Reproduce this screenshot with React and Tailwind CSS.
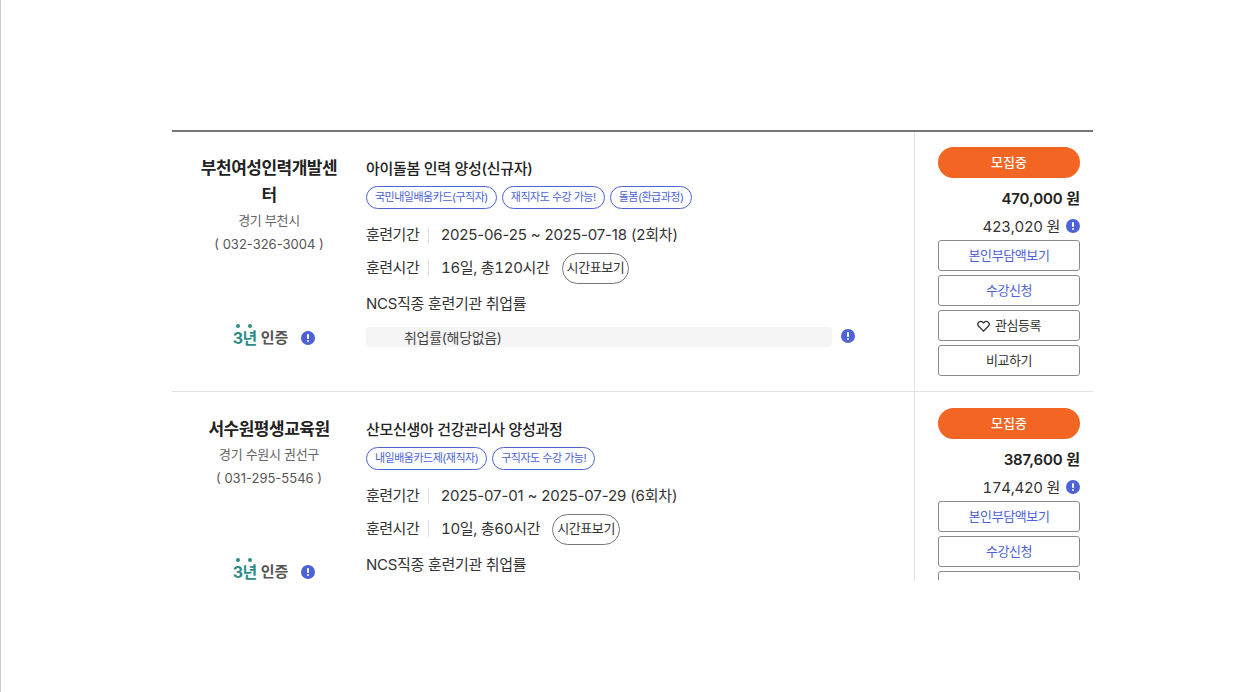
import { useState } from "react";

const courses = [
  {
    org: "부천여성인력개발센터",
    region: "경기 부천시",
    tel: "( 032-326-3004 )",
    title: "아이돌봄 인력 양성(신규자)",
    tags: ["국민내일배움카드(구직자)", "재직자도 수강 가능!", "돌봄(환급과정)"],
    period: "2025-06-25 ~ 2025-07-18 (2회차)",
    hours: "16일, 총120시간",
    price: "470,000 원",
    self: "423,020 원",
  },
  {
    org: "서수원평생교육원",
    region: "경기 수원시 권선구",
    tel: "( 031-295-5546 )",
    title: "산모신생아 건강관리사 양성과정",
    tags: ["내일배움카드제(재직자)", "구직자도 수강 가능!"],
    period: "2025-07-01 ~ 2025-07-29 (6회차)",
    hours: "10일, 총60시간",
    price: "387,600 원",
    self: "174,420 원",
  },
];

function InfoDot({ className = "" }) {
  return (
    <span className={"flex h-[14px] w-[14px] shrink-0 items-center justify-center rounded-full bg-[#4c62d6] " + className}>
      <svg width="4" height="10" viewBox="0 0 4 10">
        <rect x="1" y="1" width="2" height="5" rx="0.8" fill="#fff" />
        <circle cx="2" cy="8" r="1" fill="#fff" />
      </svg>
    </span>
  );
}

function Badge() {
  return (
    <div className="ml-[10px] flex items-center">
      <span className="relative text-[16px] leading-[24px] font-bold tracking-[-0.5px] text-[#2e8c88]">
        3년
        <span className="absolute left-[3px] top-[-2px] h-[4px] w-[4px] rounded-full bg-[#2e8c88]" />
        <span className="absolute left-[15px] top-[-2px] h-[4px] w-[4px] rounded-full bg-[#2e8c88]" />
      </span>
      <span className="ml-[4px] text-[15px] leading-[24px] font-bold text-[#555]">인증</span>
      <InfoDot className="ml-[13px]" />
    </div>
  );
}

function SideButton({ children, blue }) {
  return (
    <button className={"flex h-[31px] w-[142px] items-center justify-center gap-[5px] rounded-[3px] border border-[#8a8a8a] bg-white text-[13px] tracking-[-0.4px] " + (blue ? "text-[#4c62d6]" : "text-[#333]")}>
      {children}
    </button>
  );
}

function Row({ course, last }) {
  const [liked, setLiked] = useState(false);
  return (
    <div className={"flex " + (last ? "" : "h-[260px] border-b border-[#e2e2e2]")}>
      <div className={"flex w-[194px] shrink-0 flex-col items-center " + (last ? "pt-[24px]" : "pt-[23px]")}>
        <div className="w-[140px] break-all text-center text-[17px] leading-[27px] font-bold tracking-[-0.5px] text-[#222]">
          {course.org}
        </div>
        <div className="mt-[-1px] text-[13px] leading-[24px] tracking-[-0.3px] text-[#666]">{course.region}</div>
        <div className="text-[13px] leading-[24px] text-[#555]">{course.tel}</div>
        <div className="mt-[70px]"><Badge /></div>
      </div>

      <div className={"w-[548px] shrink-0 " + (last ? "pt-[26px]" : "pt-[25px]")}>
        <div className="text-[15px] leading-[24px] font-medium tracking-[-0.3px] text-[#222]">{course.title}</div>
        <div className="mt-[5px] flex gap-[5px]">
          {course.tags.map((t) => (
            <span key={t} className="flex h-[23px] items-center rounded-full border border-[#4c62d6] px-[8px] text-[11px] tracking-[-0.5px] text-[#4c62d6]">
              {t}
            </span>
          ))}
        </div>
        <div className="mt-[14px] flex h-[24px] items-center text-[15px] tracking-[-0.15px] text-[#333]">
          <span className="w-[53px] whitespace-nowrap tracking-[-0.5px]">훈련기간</span>
          <span className="mx-[9px] h-[16px] w-px bg-[#ddd]" />
          <span className="ml-[3px]">{course.period}</span>
        </div>
        <div className="mt-[3px] flex h-[36px] items-center text-[15px] tracking-[-0.3px] text-[#333] tabular-nums">
          <span className="w-[53px] whitespace-nowrap tracking-[-0.5px]">훈련시간</span>
          <span className="mx-[9px] h-[16px] w-px bg-[#ddd]" />
          <span className="ml-[3px]">{course.hours}</span>
          <button className="ml-[12px] h-[31px] rounded-full border border-[#777] px-[4px] text-[13px] tracking-[-0.4px] text-[#333]">시간표보기</button>
        </div>
        <div className="mt-[6px] text-[15px] leading-[24px] tracking-[-0.3px] text-[#333]">NCS직종 훈련기관 취업률</div>
        {!last && (
          <div className="mt-[11px] flex items-center">
            <div className="flex h-[20px] w-[466px] items-center rounded-[4px] bg-[#f5f5f5] pl-[38px] text-[14px] tracking-[-0.3px] text-[#444]">
              취업률(해당없음)
            </div>
            <InfoDot className="ml-[9px] mb-[2px]" />
          </div>
        )}
      </div>

      <div className={"flex flex-1 flex-col items-end border-l border-[#e2e2e2] pr-[13px] " + (last ? "pt-[16px]" : "pt-[15px]")}>
        <div className="flex h-[31px] w-[142px] items-center justify-center rounded-full bg-[#f26522] text-[13px] font-medium text-white">모집중</div>
        <div className="mt-[9px] text-[15px] leading-[24px] font-semibold tracking-[-0.1px] text-[#222]">{course.price}</div>
        <div className="mt-[4px] flex items-center text-[15px] leading-[24px] tracking-[-0.3px] text-[#333] tabular-nums">
          {course.self}
          <InfoDot className="ml-[6px] mb-[2px]" />
        </div>
        <div className="mt-[1px] flex flex-col gap-[4px]">
          <SideButton blue>본인부담액보기</SideButton>
          <SideButton blue>수강신청</SideButton>
          <SideButton>
            <svg onClick={() => setLiked(!liked)} width="13" height="12" viewBox="0 0 24 22" fill={liked ? "#333" : "none"} stroke="#333" strokeWidth="2.4">
              <path d="M12 20.5 3.2 11.6a5.4 5.4 0 0 1 0-7.6 5.3 5.3 0 0 1 7.5 0L12 5.3 13.3 4a5.3 5.3 0 0 1 7.5 0 5.4 5.4 0 0 1 0 7.6Z" />
            </svg>
            관심등록
          </SideButton>
          <SideButton>비교하기</SideButton>
        </div>
      </div>
    </div>
  );
}

export default function App() {
  return (
    <div className="h-[692px] overflow-hidden border-l border-[#c8c8c8] bg-white pt-[130px] pl-[171px] font-['Inter','Noto_Sans_CJK_KR',sans-serif]">
      <div className="h-[450px] w-[921px] overflow-hidden border-t-2 border-[#777]">
        {courses.map((c, i) => (
          <Row key={c.org} course={c} last={i === courses.length - 1} />
        ))}
      </div>
    </div>
  );
}
